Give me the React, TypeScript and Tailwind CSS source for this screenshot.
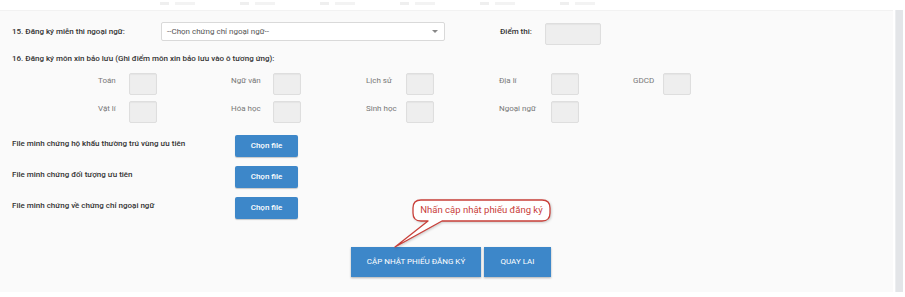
import React from 'react';

const topItems = [160, 240, 320, 400, 480, 560];

const gradeRows = [
  [
    { label: 'Toán', w: 31, cell: 133 },
    { label: 'Ngữ văn', w: 42, cell: 135 },
    { label: 'Lịch sử', w: 40, cell: 133 },
    { label: 'Địa lí', w: 52, cell: 134 },
    { label: 'GDCD', w: 30, cell: 80 },
  ],
  [
    { label: 'Vật lí', w: 31, cell: 133 },
    { label: 'Hóa học', w: 42, cell: 135 },
    { label: 'Sinh học', w: 40, cell: 133 },
    { label: 'Ngoại ngữ', w: 52, cell: 134 },
  ],
];

const fileRows = [
  'File minh chứng hộ khẩu thường trú vùng ưu tiên',
  'File minh chứng đối tượng ưu tiên',
  'File minh chứng về chứng chỉ ngoại ngữ',
];

function ScoreBox({ w = 28 }: { w?: number }) {
  return (
    <div
      className="h-[22px] rounded-[2px] border border-[#dedede] bg-[#eeeeee] shadow-[inset_0_1px_1px_rgba(0,0,0,0.04)]"
      style={{ width: w }}
    />
  );
}

function Callout() {
  return (
    <div className="absolute left-[390px] top-[196px] w-[166px] h-[56px] pointer-events-none">
      <svg width="166" height="56" viewBox="0 0 166 56" className="absolute inset-0 drop-shadow-[1px_1px_1px_rgba(0,0,0,0.18)]">
        <path
          d="M31 4 H152 Q160 4 160 12 V17 Q160 25 152 25 H52 L5 51 L38 25 H31 Q23 25 23 17 V12 Q23 4 31 4 Z"
          fill="#ffffff"
          stroke="#c9403a"
          strokeWidth="1.3"
          strokeLinejoin="round"
        />
      </svg>
      <div className="absolute left-[23px] top-[4px] w-[137px] h-[21px] flex items-center justify-center text-[9.5px] text-[#c9403a]">
        Nhấn cập nhật phiếu đăng ký
      </div>
    </div>
  );
}

export default function App() {
  return (
    <div className="relative w-[905px] h-[297px] overflow-hidden bg-white font-['Roboto',sans-serif]">
      {/* cut-off checkbox row from the section above */}
      <div className="relative h-[10px]">
        {topItems.map((x) => (
          <div key={x} className="absolute top-[2px] flex gap-[6px]" style={{ left: x }}>
            <div className="w-[9px] h-[3px] bg-[#efefef]" />
            <div className="w-[20px] h-[3px] bg-[#f3f3f3]" />
          </div>
        ))}
      </div>

      <div className="flex h-[282px]">
        <div className="w-[893px] bg-[#fafafa] border-t border-[#f2f2f2] pl-[12px] pt-[11px] text-[8px]">
          {/* 15 */}
          <div className="flex items-start">
            <div className="w-[149px] h-[19px] leading-[19px] font-medium text-[#333]">15. Đăng ký miễn thi ngoại ngữ:</div>
            <div className="w-[284px] h-[19px] flex items-center justify-between rounded-[2px] border border-[#d9d9d9] bg-white pl-[5px] pr-[6px] text-[#555]">
              <span>--Chọn chứng chỉ ngoại ngữ--</span>
              <span className="w-0 h-0 border-l-[3px] border-r-[3px] border-t-[3px] border-l-transparent border-r-transparent border-t-[#888]" />
            </div>
            <div className="ml-[55px] w-[45px] h-[19px] leading-[19px] font-medium text-[#333]">Điểm thi:</div>
            <div className="mt-[1px]">
              <ScoreBox w={56} />
            </div>
          </div>

          {/* 16 */}
          <div className="mt-[9px] leading-[10px] font-medium text-[#333]">
            16. Đăng ký môn xin bảo lưu (Ghi điểm môn xin bảo lưu vào ô tương ứng):
          </div>
          <div className="mt-[9px] pl-[86px] flex flex-col gap-[6px]">
            {gradeRows.map((row, i) => (
              <div key={i} className="flex">
                {row.map((c) => (
                  <div key={c.label} className="flex items-start" style={{ width: c.cell }}>
                    <div className="mt-[3px] leading-[10px] text-[#777]" style={{ width: c.w }}>
                      {c.label}
                    </div>
                    <ScoreBox />
                  </div>
                ))}
              </div>
            ))}
          </div>

          {/* files */}
          <div className="mt-[12px] flex flex-col gap-[9px]">
            {fileRows.map((f) => (
              <div key={f} className="flex items-center">
                <div className="w-[223px] -mt-[4px] font-medium text-[#333]">{f}</div>
                <button className="w-[63px] h-[22px] rounded-[2px] bg-[#3d87c9] text-white font-medium shadow-[0_1px_1px_rgba(0,0,0,0.2)]">
                  Chọn file
                </button>
              </div>
            ))}
          </div>

          {/* actions */}
          <div className="mt-[28px] ml-[339px] flex gap-[3px]">
            <button className="w-[130px] h-[30px] bg-[#3d87c9] text-white shadow-[0_1px_2px_rgba(0,0,0,0.3)]">
              CẬP NHẬT PHIẾU ĐĂNG KÝ
            </button>
            <button className="w-[67px] h-[30px] bg-[#3d87c9] text-white shadow-[0_1px_2px_rgba(0,0,0,0.3)]">
              QUAY LAI
            </button>
          </div>
        </div>
        <div className="ml-[2px] w-[8px] bg-[#e3e5e8] border-l border-[#eceef0]" />
      </div>

      <Callout />
    </div>
  );
}
